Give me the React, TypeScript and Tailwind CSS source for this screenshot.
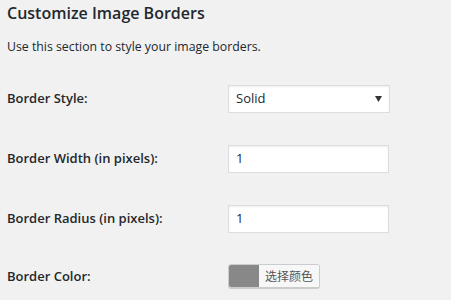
export default function App() {
  const font = { fontFamily: '"Open Sans", "Noto Sans", "Noto Sans CJK SC", sans-serif' };
  return (
    <div className="w-[451px] h-[300px] overflow-hidden bg-[#f1f1f1] text-[#23282d] pl-[7px]" style={font}>
      <h2 className="text-[16px] font-semibold leading-[24px] pt-[1px] m-0">Customize Image Borders</h2>
      <p className="text-[12.3px] leading-[20px] mt-[12px]">Use this section to style your image borders.</p>
      <div className="flex flex-col mt-[28px]">
        <div className="flex items-center h-[28px]">
          <div className="w-[221px] text-[13px] font-semibold">Border Style:</div>
          <div className="w-[162px] h-[28px] bg-white border border-[#ddd] shadow-[inset_0_1px_2px_rgba(0,0,0,0.07)] flex items-center justify-between pl-[7px] pr-[7px] text-[13px]">
            <span>Solid</span>
            <svg width="7" height="6" viewBox="0 0 7 6"><path d="M0 0h7L3.5 6z" fill="#333" /></svg>
          </div>
        </div>
        <div className="flex items-center h-[28px] mt-[32px]">
          <div className="w-[221px] text-[13px] font-semibold">Border Width (in pixels):</div>
          <div className="w-[161px] h-[28px] bg-white border border-[#ddd] shadow-[inset_0_1px_2px_rgba(0,0,0,0.07)] flex items-center pl-[7px] text-[13px]">1</div>
        </div>
        <div className="flex items-center h-[28px] mt-[32px]">
          <div className="w-[221px] text-[13px] font-semibold">Border Radius (in pixels):</div>
          <div className="w-[161px] h-[28px] bg-white border border-[#ddd] shadow-[inset_0_1px_2px_rgba(0,0,0,0.07)] flex items-center pl-[7px] text-[13px]">1</div>
        </div>
        <div className="flex items-center h-[24px] mt-[31px]">
          <div className="w-[221px] text-[13px] font-semibold pt-[2px]">Border Color:</div>
          <div className="flex h-[24px] w-[92px] border border-[#ccc] rounded-[3px] bg-[#f7f7f7] shadow-[0_1px_0_#ccc] overflow-hidden">
            <div className="w-[30px] h-full bg-[#888]" />
            <div className="flex-1 flex items-center justify-center text-[12px] text-[#555] bg-[#f7f7f7]" style={{ fontFamily: '"Noto Sans CJK SC", sans-serif' }}>选择颜色</div>
          </div>
        </div>
      </div>
    </div>
  );
}
